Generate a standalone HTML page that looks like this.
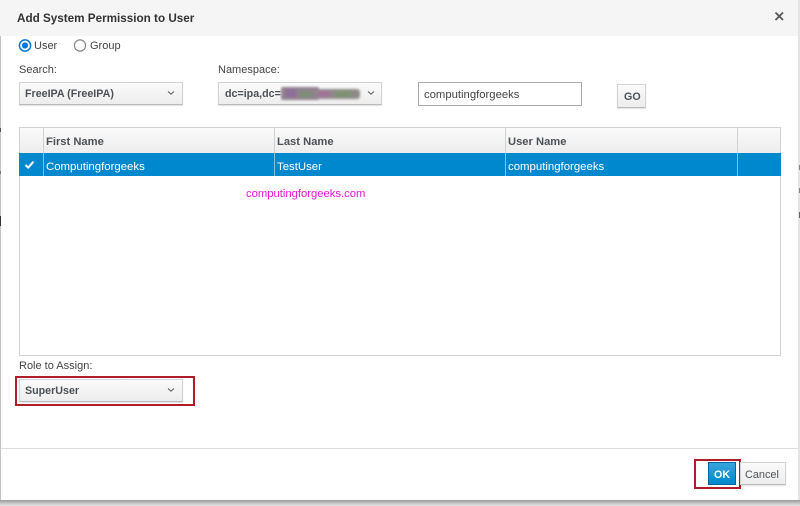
<!DOCTYPE html>
<html><head><meta charset="utf-8">
<style>
html,body{margin:0;padding:0;width:800px;height:506px;overflow:hidden;background:#fff}
body{position:relative;font-family:"Liberation Sans",sans-serif;font-size:11px;color:#444}
#w{position:absolute;left:0;top:0;width:800px;height:506px;filter:blur(.35px);background:#fff}
div,span{position:absolute;white-space:nowrap;box-sizing:border-box}
.t{line-height:16px}
.sel{background:linear-gradient(#fafafa,#ededed);border:1px solid #d4d4d4;border-bottom-color:#bbb;box-shadow:0 1px 1px rgba(0,0,0,.12)}
.b{font-weight:bold;color:#4d5258}
.h{font-size:11.2px}
.r{font-size:11.4px;color:#fff}
.s{font-size:10.7px}
svg{position:absolute}
</style></head><body><div id="w">
<div style="left:0;top:0;width:1px;height:506px;background:#c4c4c4"></div>
<div style="left:798px;top:0;width:2px;height:506px;background:#e4e4e4"></div>
<div style="left:0;top:128px;width:1px;height:4px;background:#555"></div>
<div style="left:0;top:171px;width:1px;height:3px;background:#777"></div>
<div style="left:0;top:216px;width:1px;height:10px;background:#333"></div>
<div style="left:799px;top:165px;width:1px;height:5px;background:#888"></div>
<div style="left:799px;top:188px;width:1px;height:5px;background:#888"></div>
<div style="left:799px;top:212px;width:1px;height:6px;background:#666"></div>
<div style="left:0;top:0;width:798px;height:36px;background:#f5f5f5"></div>
<div class="t" style="left:17px;top:11px;font-size:11.7px;font-weight:bold;color:#333;width:180px">Add System Permission to User</div>
<svg style="left:774px;top:11px" width="11" height="11" viewBox="0 0 11 11"><path d="M1.5 1.5L9 9M9 1.5L1.5 9" stroke="#555" stroke-width="1.8" fill="none"/></svg>

<svg style="left:18px;top:38px" width="15" height="15" viewBox="0 0 15 15"><circle cx="7" cy="7.5" r="5.6" fill="#fff" stroke="#0a78d0" stroke-width="1.5"/><circle cx="7" cy="7.5" r="3.1" fill="#0a78d0"/></svg>
<div class="t" style="left:34px;top:38px">User</div>
<svg style="left:73px;top:38px" width="15" height="15" viewBox="0 0 15 15"><circle cx="7" cy="7.5" r="5.6" fill="#fff" stroke="#888" stroke-width="1.2"/></svg>
<div class="t" style="left:90px;top:38px">Group</div>

<div class="t" style="left:19px;top:62px">Search:</div>
<div class="t" style="left:218px;top:62px">Namespace:</div>

<div class="sel" style="left:19px;top:82px;width:164px;height:23px"></div>
<div class="t b s" style="left:25px;top:86px">FreeIPA (FreeIPA)</div>
<svg style="left:167px;top:90px" width="8" height="6" viewBox="0 0 8 6"><path d="M1 1.5L4 4.2L7 1.5" stroke="#555" fill="none"/></svg>

<div class="sel" style="left:218px;top:82px;width:164px;height:23px"></div>
<div class="t b s" style="left:225px;top:86px">dc=ipa,dc=</div>
<svg style="left:280px;top:85px" width="84" height="17" viewBox="0 0 84 17"><defs><filter id="bl"><feGaussianBlur stdDeviation="1.3"/></filter></defs><g filter="url(#bl)"><rect x="1" y="2" width="38" height="13" rx="2" fill="#93808f"/><rect x="36" y="4" width="44" height="10" rx="3" fill="#8e8a88"/><rect x="6" y="4" width="10" height="8" fill="#8d6d9a"/><rect x="20" y="6" width="12" height="7" fill="#7d8d78"/><rect x="38" y="6" width="12" height="6" fill="#a2729a"/><rect x="56" y="6" width="14" height="6" fill="#7f9270"/></g></svg>
<svg style="left:367px;top:90px" width="8" height="6" viewBox="0 0 8 6"><path d="M1 1.5L4 4.2L7 1.5" stroke="#555" fill="none"/></svg>

<div style="left:418px;top:82px;width:164px;height:24px;background:#fff;border:1px solid #aaa"></div>
<div class="t" style="left:424px;top:87px;font-size:11.3px;color:#444">computingforgeeks</div>

<div class="sel" style="left:617px;top:84px;width:29px;height:24px"></div>
<div class="t b s" style="left:624px;top:89px">GO</div>

<div style="left:19px;top:127px;width:762px;height:229px;border:1px solid #d1d1d1;background:#fff"></div>
<div style="left:20px;top:128px;width:760px;height:25px;background:linear-gradient(#fafafa,#ededed)"></div>
<div style="left:43px;top:128px;width:1px;height:25px;background:#d1d1d1"></div>
<div style="left:274px;top:128px;width:1px;height:25px;background:#d1d1d1"></div>
<div style="left:505px;top:128px;width:1px;height:25px;background:#d1d1d1"></div>
<div style="left:737px;top:128px;width:1px;height:25px;background:#d1d1d1"></div>
<div class="t b h" style="left:46px;top:134px">First Name</div>
<div class="t b h" style="left:277px;top:134px">Last Name</div>
<div class="t b h" style="left:508px;top:134px">User Name</div>

<div style="left:19px;top:153px;width:762px;height:23px;background:#0088ce"></div>
<div style="left:43px;top:153px;width:1px;height:23px;background:#7cc0e4"></div>
<div style="left:274px;top:153px;width:1px;height:23px;background:#7cc0e4"></div>
<div style="left:505px;top:153px;width:1px;height:23px;background:#7cc0e4"></div>
<div style="left:737px;top:153px;width:1px;height:23px;background:#7cc0e4"></div>
<svg style="left:24px;top:160px" width="11" height="10" viewBox="0 0 11 10"><path d="M1.5 5L4.2 7.6L9.5 1.6" stroke="#fff" stroke-width="2" fill="none"/></svg>
<div class="t r" style="left:46px;top:159px">Computingforgeeks</div>
<div class="t r" style="left:277px;top:159px">TestUser</div>
<div class="t r" style="left:508px;top:159px">computingforgeeks</div>

<div class="t" style="left:246px;top:186px;font-size:11.25px;color:#e815d6">computingforgeeks.com</div>

<div class="t" style="left:19px;top:358px">Role to Assign:</div>
<div style="left:15px;top:376px;width:180px;height:30px;border:2px solid #b01c27"></div>
<div class="sel" style="left:19px;top:379px;width:164px;height:23px"></div>
<div class="t b s" style="left:25px;top:383px">SuperUser</div>
<svg style="left:167px;top:387px" width="8" height="6" viewBox="0 0 8 6"><path d="M1 1.5L4 4.2L7 1.5" stroke="#555" fill="none"/></svg>

<div style="left:1px;top:448px;width:797px;height:1px;background:#ddd"></div>
<div style="left:0;top:500px;width:800px;height:6px;background:linear-gradient(#999,#e8e8e8)"></div>

<div style="left:694px;top:459px;width:47px;height:30px;border:2px solid #b01c27"></div>
<div style="left:708px;top:462px;width:28px;height:23px;background:linear-gradient(#39a5dc,#0088ce);border:1px solid #00659c"></div>
<div class="t s" style="left:714px;top:467px;font-weight:bold;color:#fff">OK</div>
<div class="sel" style="left:740px;top:462px;width:46px;height:23px"></div>
<div class="t" style="left:745px;top:467px;font-size:10.9px;color:#4d5258">Cancel</div>
</div></body></html>
